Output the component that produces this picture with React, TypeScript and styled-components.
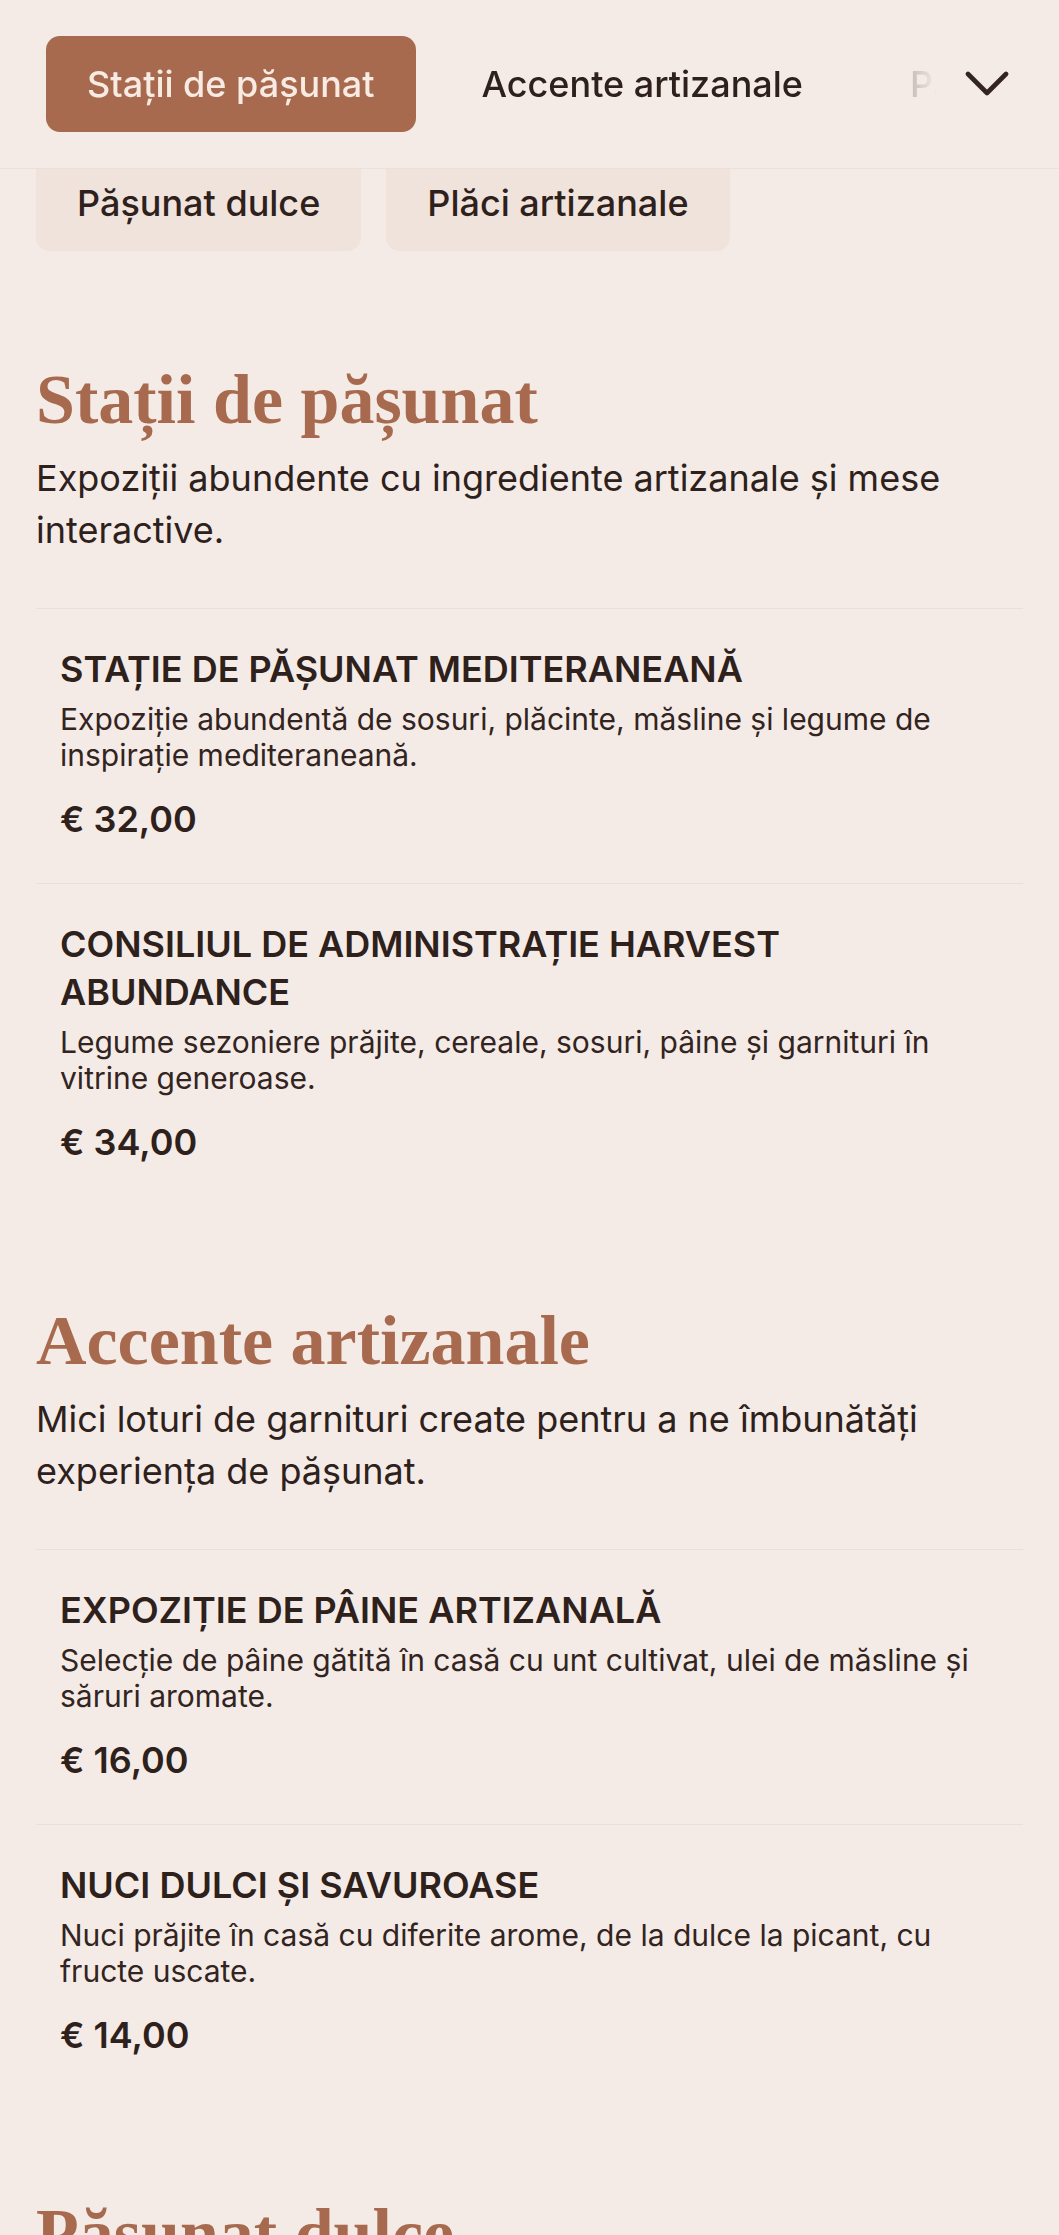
import React from 'react';
import styled, { createGlobalStyle } from 'styled-components';

type Item = { name: string; description: string; price: string };
type Section = { title: string; intro: string; items: Item[] };

const sections: Section[] = [
  {
    title: 'Stații de pășunat',
    intro: 'Expoziții abundente cu ingrediente artizanale și mese interactive.',
    items: [
      {
        name: 'Stație de pășunat mediteraneană',
        description: 'Expoziție abundentă de sosuri, plăcinte, măsline și legume de inspirație mediteraneană.',
        price: '€ 32,00',
      },
      {
        name: 'Consiliul de administrație Harvest Abundance',
        description: 'Legume sezoniere prăjite, cereale, sosuri, pâine și garnituri în vitrine generoase.',
        price: '€ 34,00',
      },
    ],
  },
  {
    title: 'Accente artizanale',
    intro: 'Mici loturi de garnituri create pentru a ne îmbunătăți experiența de pășunat.',
    items: [
      {
        name: 'Expoziție de pâine artizanală',
        description: 'Selecție de pâine gătită în casă cu unt cultivat, ulei de măsline și săruri aromate.',
        price: '€ 16,00',
      },
      {
        name: 'Nuci dulci și savuroase',
        description: 'Nuci prăjite în casă cu diferite arome, de la dulce la picant, cu fructe uscate.',
        price: '€ 14,00',
      },
    ],
  },
  {
    title: 'Pășunat dulce',
    intro: 'Deserturi mici și dulciuri de casă pentru finalul mesei.',
    items: [],
  },
];

const tabs = ['Stații de pășunat', 'Accente artizanale', 'Pășunat dulce', 'Plăci artizanale'];
const moreTabs = ['Pășunat dulce', 'Plăci artizanale'];

const GlobalStyle = createGlobalStyle`
  html, body {
    margin: 0;
    padding: 0;
    background: #f4ebe6;
  }
  body {
    font-family: Inter, "Noto Sans", "Liberation Sans", sans-serif;
    color: #2e211c;
    -webkit-font-smoothing: antialiased;
  }
  * { box-sizing: border-box; }
`;

const Header = styled.header`
  position: sticky;
  top: 0;
  z-index: 2;
  display: flex;
  align-items: center;
  height: 169px;
  padding: 36px 44px 36px 46px;
  background: #f4ebe6;
  border-bottom: 1px solid #ece0d9;
`;

const fade =
  'linear-gradient(to right, #000 calc(100% - 150px), rgba(0,0,0,0.22) calc(100% - 48px), transparent calc(100% - 22px))';

const TabStrip = styled.nav`
  flex: 1;
  min-width: 0;
  display: flex;
  gap: 25px;
  overflow: hidden;
  mask-image: ${fade};
  -webkit-mask-image: ${fade};
`;

const Tab = styled.button<{ $active?: boolean }>`
  flex: none;
  height: 96px;
  padding: 0 41px;
  border: 0;
  border-radius: 14px;
  background: ${(p) => (p.$active ? '#a86a4e' : 'transparent')};
  color: ${(p) => (p.$active ? '#f8ebe3' : '#2e211c')};
  font-family: Inter, "Noto Sans", sans-serif;
  font-size: 36px;
  font-weight: 500;
  white-space: nowrap;
  cursor: pointer;
`;

const MenuToggle = styled.button`
  flex: none;
  width: 56px;
  height: 96px;
  display: flex;
  align-items: center;
  justify-content: center;
  padding: 0;
  border: 0;
  background: transparent;
  color: #33241f;
  cursor: pointer;
`;

const MoreRow = styled.div`
  position: relative;
  z-index: 1;
  display: flex;
  gap: 25px;
  margin-top: -14px;
  padding: 0 36px;
`;

const Chip = styled.button`
  height: 96px;
  padding: 0 41px;
  border: 0;
  border-radius: 14px;
  background: #f0e3dc;
  color: #2e211c;
  font-family: Inter, "Noto Sans", sans-serif;
  font-size: 36px;
  font-weight: 500;
  white-space: nowrap;
`;

const Main = styled.main`
  padding: 14px 36px 0;
`;

const MenuSection = styled.section`
  padding-top: 96px;
`;

const SectionTitle = styled.h2`
  margin: 0;
  font-family: "Liberation Serif", "DejaVu Serif", serif;
  font-size: 70px;
  line-height: 77px;
  font-weight: 700;
  color: #a86a4e;
`;

const SectionIntro = styled.p`
  margin: 14px 0 0;
  font-size: 36px;
  line-height: 52px;
  color: #2e211c;
`;

const ItemList = styled.ul`
  list-style: none;
  margin: 52px 0 0;
  padding: 0;
`;

const MenuItem = styled.li`
  padding: 36px 24px 40px;
  border-top: 1px solid #ecdfd7;
`;

const ItemName = styled.h3`
  margin: 0;
  font-size: 36px;
  line-height: 48px;
  font-weight: 600;
  text-transform: uppercase;
  color: #2e211c;
`;

const ItemDescription = styled.p`
  margin: 8px 0 0;
  font-size: 30px;
  line-height: 36px;
  color: #33241f;
`;

const ItemPrice = styled.div`
  margin-top: 22px;
  font-size: 36px;
  line-height: 48px;
  font-weight: 600;
  color: #2e211c;
`;

const Chevron = () => (
  <svg width="44" height="26" viewBox="0 0 44 26" fill="none" aria-hidden="true">
    <polyline
      points="3,3 22,22 41,3"
      stroke="currentColor"
      strokeWidth="4.6"
      strokeLinecap="round"
      strokeLinejoin="round"
    />
  </svg>
);

const App = () => {
  return (
    <>
      <GlobalStyle />
      <Header>
        <TabStrip>
          {tabs.map((t, i) => (
            <Tab key={t} $active={i === 0}>
              {t}
            </Tab>
          ))}
        </TabStrip>
        <MenuToggle aria-label="Mai multe categorii">
          <Chevron />
        </MenuToggle>
      </Header>
      <MoreRow>
        {moreTabs.map((t) => (
          <Chip key={t}>{t}</Chip>
        ))}
      </MoreRow>
      <Main>
        {sections.map((s) => (
          <MenuSection key={s.title}>
            <SectionTitle>{s.title}</SectionTitle>
            <SectionIntro>{s.intro}</SectionIntro>
            {s.items.length > 0 && (
              <ItemList>
                {s.items.map((it) => (
                  <MenuItem key={it.name}>
                    <ItemName>{it.name}</ItemName>
                    <ItemDescription>{it.description}</ItemDescription>
                    <ItemPrice>{it.price}</ItemPrice>
                  </MenuItem>
                ))}
              </ItemList>
            )}
          </MenuSection>
        ))}
      </Main>
    </>
  );
};

export default App;
